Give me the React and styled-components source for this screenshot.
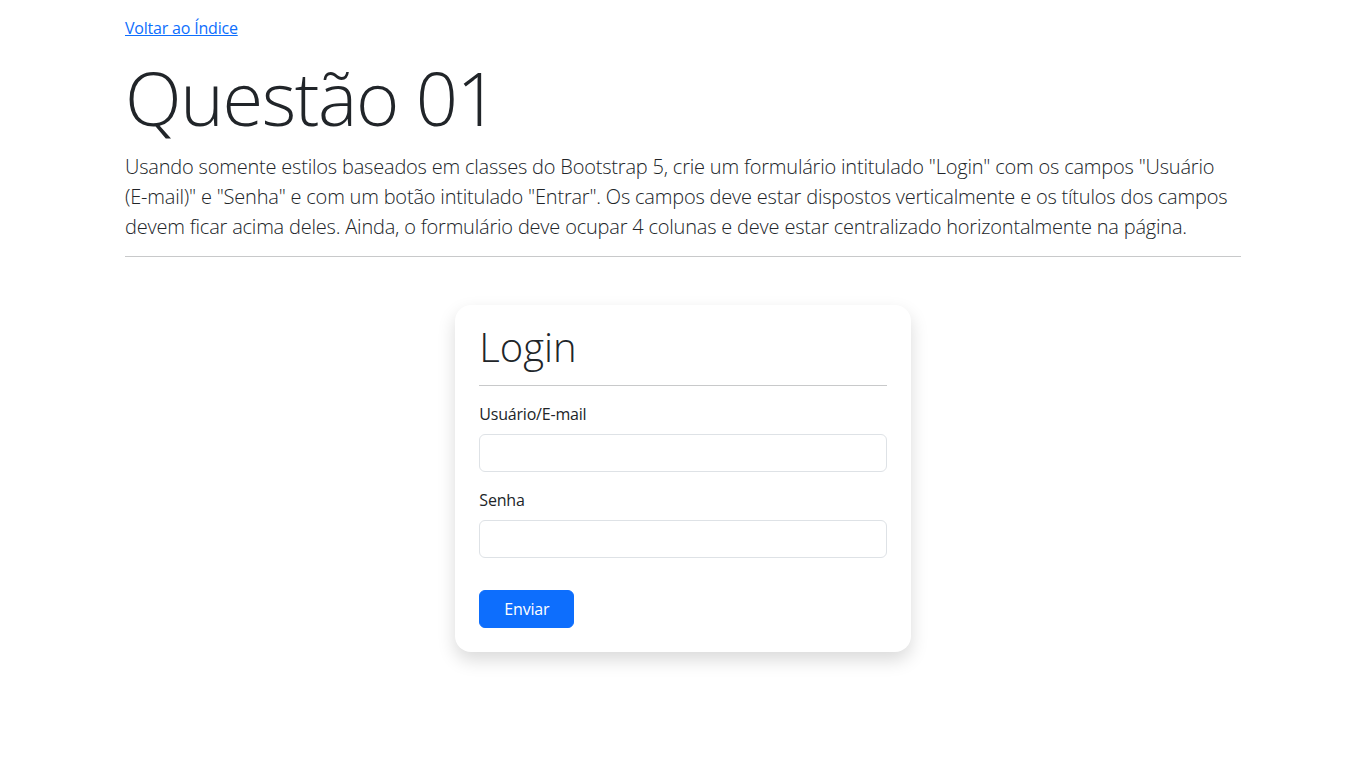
import React from "react";
import styled, { createGlobalStyle } from "styled-components";

const GlobalStyle = createGlobalStyle`
  *, *::before, *::after {
    box-sizing: border-box;
  }
  body {
    margin: 0;
    font-family: "Open Sans", "Noto Sans", sans-serif;
    font-size: 16px;
    line-height: 1.5;
    color: #212529;
    background: #fff;
  }
`;

const App = () => {
  return (
    <>
      <GlobalStyle />
      <Container>
        <BackLink href="#">Voltar ao Índice</BackLink>
        <Title>Questão 01</Title>
        <Lead>
          Usando somente estilos baseados em classes do Bootstrap 5, crie um
          formulário intitulado "Login" com os campos "Usuário (E-mail)" e
          "Senha" e com um botão intitulado "Entrar". Os campos deve estar
          dispostos verticalmente e os títulos dos campos devem ficar acima
          deles. Ainda, o formulário deve ocupar 4 colunas e deve estar
          centralizado horizontalmente na página.
        </Lead>
        <Divider />
      </Container>
      <FormRow>
        <Card onSubmit={(e) => e.preventDefault()}>
          <CardTitle>Login</CardTitle>
          <CardDivider />
          <Field>
            <Label htmlFor="usuario">Usuário/E-mail</Label>
            <Input id="usuario" type="email" />
          </Field>
          <Field>
            <Label htmlFor="senha">Senha</Label>
            <Input id="senha" type="password" />
          </Field>
          <SubmitButton type="submit">Enviar</SubmitButton>
        </Card>
      </FormRow>
    </>
  );
};
export default App;

const Container = styled.div`
  max-width: 1116px;
  margin: 0 auto;
  padding-top: 16px;
`;

const BackLink = styled.a`
  display: inline-block;
  color: #0d6efd;
  text-decoration: underline;
  font-size: 16px;
  letter-spacing: -0.2px;
`;

const Title = styled.h1`
  font-size: 74px;
  font-weight: 300;
  line-height: 96px;
  letter-spacing: -1.4px;
  margin: 10px 0 6px;
`;

const Lead = styled.p`
  font-size: 20px;
  font-weight: 300;
  line-height: 1.5;
  letter-spacing: -0.2px;
  margin: 0 0 14px;
`;

const Divider = styled.hr`
  border: 0;
  border-top: 1px solid #c8c9ca;
  margin: 0;
`;

const FormRow = styled.div`
  display: flex;
  justify-content: center;
  padding: 48px 0 64px;
`;

const Card = styled.form`
  width: 33.3333%;
  padding: 24px;
  background: #fff;
  border-radius: 16px;
  box-shadow: 0 8px 18px rgba(0, 0, 0, 0.15);
`;

const CardTitle = styled.h1`
  font-size: 40px;
  font-weight: 300;
  line-height: 36px;
  margin: 0 0 20px;
`;

const CardDivider = styled.hr`
  border: 0;
  border-top: 1px solid #c8c9ca;
  margin: 0 0 16px;
`;

const Field = styled.div`
  margin-bottom: 16px;
`;

const Label = styled.label`
  display: block;
  font-size: 16px;
  letter-spacing: -0.2px;
  margin-bottom: 8px;
`;

const Input = styled.input`
  display: block;
  width: 100%;
  height: 38px;
  padding: 6px 12px;
  font: inherit;
  border: 1px solid #dee2e6;
  border-radius: 6px;
  outline: none;
`;

const SubmitButton = styled.button`
  margin-top: 16px;
  padding: 6px 24px;
  height: 38px;
  font: inherit;
  letter-spacing: -0.2px;
  color: #fff;
  background: #0d6efd;
  border: 1px solid #0d6efd;
  border-radius: 6px;
  cursor: pointer;
`;
